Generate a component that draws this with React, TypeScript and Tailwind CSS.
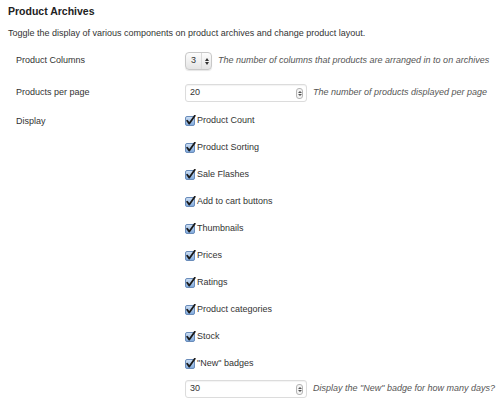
import React from 'react';

const Check: React.FC = () => (
  <svg width="11" height="11" viewBox="0 0 11 11" className="shrink-0">
    <defs>
      <linearGradient id="cb" x1="0" y1="0" x2="0" y2="1">
        <stop offset="0" stopColor="#cfe0f4" />
        <stop offset="1" stopColor="#7ea8dc" />
      </linearGradient>
    </defs>
    <rect x="0.5" y="1.5" width="9" height="9" rx="1.5" fill="url(#cb)" stroke="#6a8cba" />
    <path d="M2.2 5.8 L4.3 8.6 L9.8 0.8" fill="none" stroke="#1a1a1a" strokeWidth="1.8" strokeLinecap="round" strokeLinejoin="round" />
  </svg>
);

const Spinner: React.FC = () => (
  <div className="flex h-[11px] w-[7px] flex-col items-center justify-center gap-[1px] rounded-[3px] border border-[#b5b5b5] bg-[#f4f4f4]">
    <span className="block h-0 w-0 border-x-[2px] border-b-[2px] border-x-transparent border-b-[#555]" />
    <span className="block h-0 w-0 border-x-[2px] border-t-[2px] border-x-transparent border-t-[#555]" />
  </div>
);

const NumberInput: React.FC<{ value: string }> = ({ value }) => (
  <div className="flex h-[18px] w-[122px] shrink-0 items-center justify-between rounded-[3px] border border-[#dcdcdc] bg-white pl-[4px] pr-[3px] shadow-[inset_0_1px_1px_rgba(0,0,0,0.05)]">
    <span className="text-[9px] text-[#333]">{value}</span>
    <Spinner />
  </div>
);

const items = [
  'Product Count',
  'Product Sorting',
  'Sale Flashes',
  'Add to cart buttons',
  'Thumbnails',
  'Prices',
  'Ratings',
  'Product categories',
  'Stock',
  '"New" badges',
];

const App: React.FC = () => {
  return (
    <div className="h-[403px] w-[500px] overflow-hidden bg-white text-[#333]" style={{ fontFamily: '"Liberation Sans", Arial, sans-serif' }}>
      <h2 className="pl-[8px] pt-[5px] text-[10.5px] font-bold leading-[13px] text-[#222]">Product Archives</h2>
      <p className="mt-[10px] pl-[8px] text-[9px] leading-[11px]">
        Toggle the display of various components on product archives and change product layout.
      </p>

      <div className="mt-[11px] pl-[16px]">
        {/* Product Columns */}
        <div className="flex h-[22px] items-center">
          <div className="w-[169px] shrink-0 text-[9px]">Product Columns</div>
          <div className="flex items-center gap-[6px]">
            <div className="flex h-[18px] w-[27px] shrink-0 items-center rounded-[4px] border border-[#c8c8c8] bg-gradient-to-b from-[#fdfdfd] to-[#e4e4e4] shadow-[0_1px_1px_rgba(0,0,0,0.1)]">
              <span className="w-[15px] text-center text-[9px] font-medium">3</span>
              <div className="flex h-full flex-col items-center justify-center gap-[1px] border-l border-[#dadada] pl-[3px]">
                <span className="block h-0 w-0 border-x-[2px] border-b-[3px] border-x-transparent border-b-[#333]" />
                <span className="block h-0 w-0 border-x-[2px] border-t-[3px] border-x-transparent border-t-[#333]" />
              </div>
            </div>
            <span className="whitespace-nowrap text-[9px] italic text-[#555]">The number of columns that products are arranged in to on archives</span>
          </div>
        </div>

        {/* Products per page */}
        <div className="mt-[10px] flex h-[22px] items-center">
          <div className="w-[169px] shrink-0 text-[9px]">Products per page</div>
          <div className="flex items-center gap-[6px]">
            <NumberInput value="20" />
            <span className="whitespace-nowrap text-[9px] italic text-[#555]">The number of products displayed per page</span>
          </div>
        </div>

        {/* Display */}
        <div className="mt-[3px] flex">
          <div className="w-[169px] shrink-0 pt-[9px] text-[9px] leading-[11px]">Display</div>
          <div className="flex flex-col">
            {items.map((item) => (
              <div key={item} className="flex h-[27px] items-center gap-[1px]">
                <Check />
                <span className="text-[9px]">{item}</span>
              </div>
            ))}
            <div className="flex h-[24px] items-center gap-[6px]">
              <NumberInput value="30" />
              <span className="whitespace-nowrap text-[9px] italic text-[#555]">Display the "New" badge for how many days?</span>
            </div>
          </div>
        </div>
      </div>
    </div>
  );
};

export default App;
